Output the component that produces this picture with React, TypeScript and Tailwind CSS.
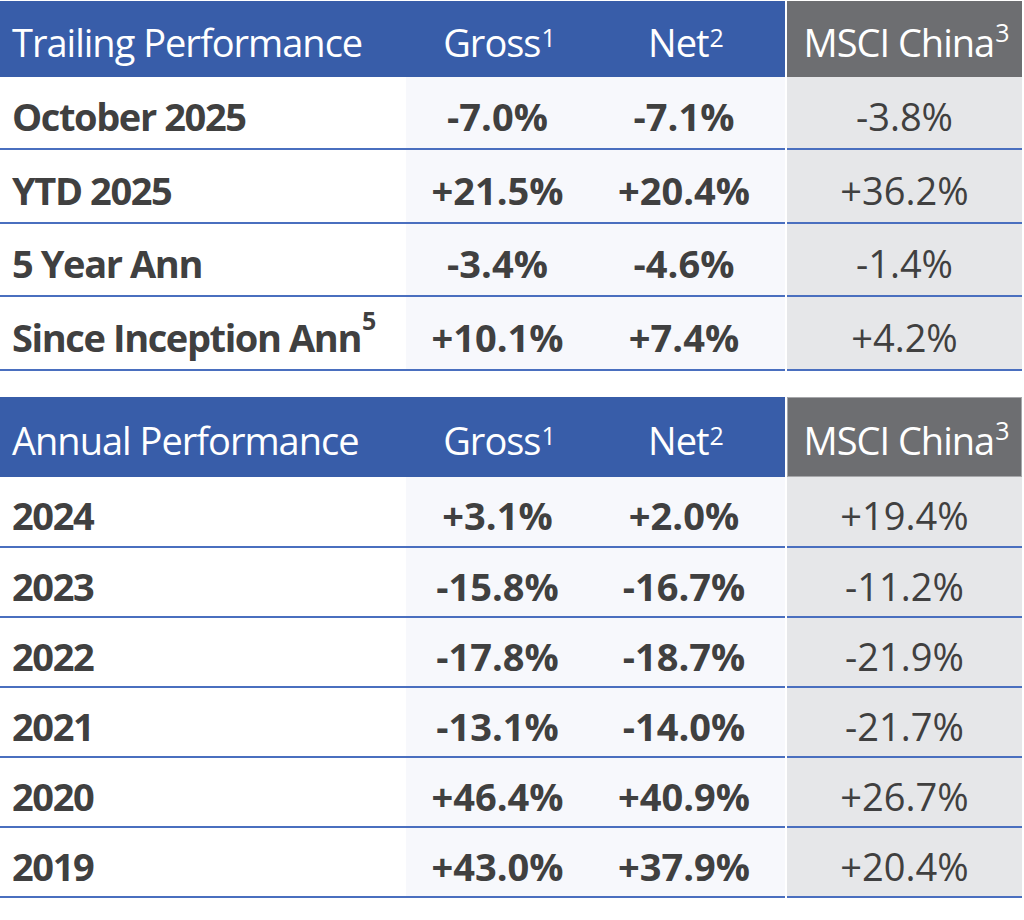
import React from "react";

type Row = { label: React.ReactNode; gross: string; net: string; idx: string };

const trailing: Row[] = [
  { label: "October 2025", gross: "-7.0%", net: "-7.1%", idx: "-3.8%" },
  { label: "YTD 2025", gross: "+21.5%", net: "+20.4%", idx: "+36.2%" },
  { label: "5 Year Ann", gross: "-3.4%", net: "-4.6%", idx: "-1.4%" },
  {
    label: (
      <>
        Since Inception Ann<sup className="relative -top-[17px] ml-[1px] text-[25px] tracking-normal">5</sup>
      </>
    ),
    gross: "+10.1%",
    net: "+7.4%",
    idx: "+4.2%",
  },
];

const annual: Row[] = [
  { label: "2024", gross: "+3.1%", net: "+2.0%", idx: "+19.4%" },
  { label: "2023", gross: "-15.8%", net: "-16.7%", idx: "-11.2%" },
  { label: "2022", gross: "-17.8%", net: "-18.7%", idx: "-21.9%" },
  { label: "2021", gross: "-13.1%", net: "-14.0%", idx: "-21.7%" },
  { label: "2020", gross: "+46.4%", net: "+40.9%", idx: "+26.7%" },
  { label: "2019", gross: "+43.0%", net: "+37.9%", idx: "+20.4%" },
];

const Sup = ({ children }: { children: React.ReactNode }) => (
  <sup className="relative -top-[10px] ml-[1px] text-[25px] tracking-normal">{children}</sup>
);

function Table({
  title,
  rows,
  headerH,
  rowHeights,
  grayBorder,
}: {
  title: string;
  rows: Row[];
  headerH: string;
  rowHeights: string[];
  grayBorder?: boolean;
}) {
  return (
    <div className="w-[1022px]">
      <div
        className={`grid grid-cols-[406px_183px_196px_237px] ${headerH} text-white text-[38px] tracking-[-1px]`}
      >
        <div className="col-span-3 flex items-center bg-[#385da9] pt-[6px]">
          <div className="w-[406px] pl-[12px]">{title}</div>
          <div className="w-[183px] text-center pl-[4px]">
            Gross<Sup>1</Sup>
          </div>
          <div className="w-[196px] text-center pr-[2px]">
            Net<Sup>2</Sup>
          </div>
        </div>
        <div
          className={`flex items-center justify-center bg-[#6d6e71] pt-[6px] ml-[2px] pl-[4px] ${
            grayBorder ? "border border-[#a6a7aa]" : ""
          }`}
        >
          MSCI China<Sup>3</Sup>
        </div>
      </div>
      {rows.map((r, i) => (
        <div
          key={i}
          className={`grid grid-cols-[406px_183px_196px_237px] ${rowHeights[i]} text-[38px] text-[#404040]`}
        >
          <div className="flex items-center bg-white pl-[12px] pt-[8px] font-bold tracking-[-1.4px] border-b-2 border-[#4a6fbf]">
            {r.label}
          </div>
          <div className="flex items-center justify-center bg-[#f7f8fc] pt-[8px] font-bold border-b-2 border-[#4a6fbf]">
            {r.gross}
          </div>
          <div className="flex items-center justify-center bg-[#f7f8fc] pt-[8px] font-bold border-b-2 border-[#4a6fbf] pr-[6px]">
            {r.net}
          </div>
          <div className="flex items-center justify-center bg-[#e6e7e9] pt-[8px] border-b-2 border-[#4a6fbf] ml-[2px]">
            {r.idx}
          </div>
        </div>
      ))}
    </div>
  );
}

export default function App() {
  return (
    <div
      className="w-[1024px] h-[920px] bg-white pt-[1px]"
      style={{ fontFamily: '"Open Sans", sans-serif' }}
    >
      <Table
        title="Trailing Performance"
        rows={trailing}
        headerH="h-[76px]"
        rowHeights={["h-[73px]", "h-[74px]", "h-[73px]", "h-[74px]"]}
      />
      <div className="h-[26px]" />
      <Table
        title="Annual Performance"
        rows={annual}
        headerH="h-[80px]"
        rowHeights={["h-[71px]", "h-[70px]", "h-[70px]", "h-[70px]", "h-[70px]", "h-[70px]"]}
        grayBorder
      />
    </div>
  );
}
